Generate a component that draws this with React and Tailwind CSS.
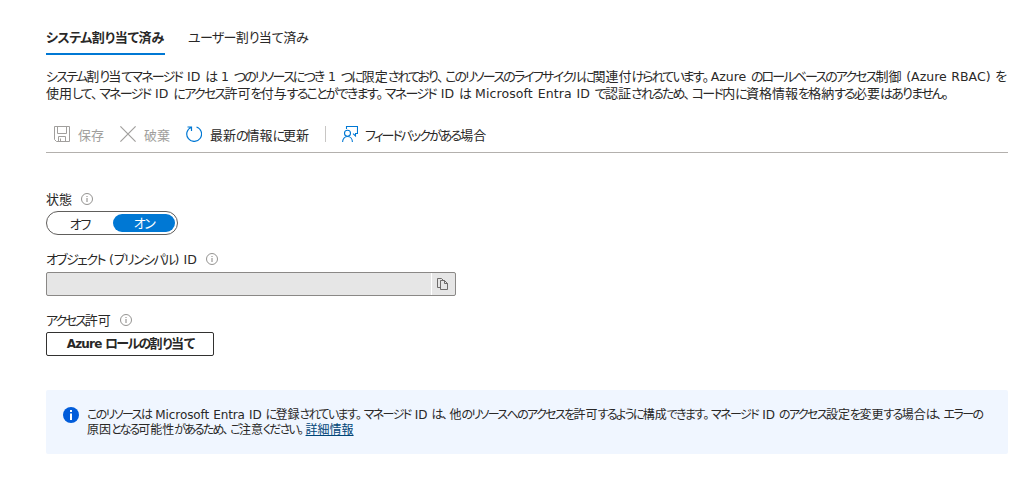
import React from "react";

const RUNS = /([\u3001\u3002]+|[\u3041-\u309f]+|[\u30a0-\u30ff]+|[\x20-\x7e]+|[^\u3001\u3002\u3041-\u30ff\x20-\x7e]+)/g;

// Mixed Japanese and Latin text: proportional kana, full-width kanji.
function Text({
  children,
  hira = "tracking-[-1.3px]",
  kata = "tracking-[-1.6px]",
  latin = "text-[12.5px] tracking-[0.1px]",
}) {
  return children.match(RUNS).map((run, i) => {
    if (/^[\u3001\u3002]/.test(run)) {
      return (
        <span key={i} className="[font-feature-settings:'palt'] tracking-[1.6px]">
          {run}
        </span>
      );
    }
    if (/^[\u3041-\u30ff]/.test(run)) {
      return (
        <span key={i} className={`[font-feature-settings:'palt'] ${run < "\u30a0" ? hira : kata}`}>
          {run}
        </span>
      );
    }
    if (/^[\x20-\x7e]/.test(run)) {
      return (
        <span key={i} className={`font-['DejaVu_Sans',sans-serif] whitespace-pre leading-none ${latin}`}>
          {run}
        </span>
      );
    }
    return <span key={i}>{run}</span>;
  });
}

function InfoOutline() {
  return (
    <svg className="size-3 shrink-0" viewBox="0 0 12 12" fill="none" stroke="#797775">
      <circle cx="6" cy="6" r="5.5" strokeWidth="0.8" />
      <path d="M6 5v4M6 3v1" strokeWidth="0.9" />
    </svg>
  );
}

function SaveIcon() {
  return (
    <svg className="size-4 shrink-0" viewBox="0 0 16 16" fill="none" stroke="#a19f9d">
      <path d="M.5.5h15v15H2.500L.5 13.500zM3.500.5v7h9v-7M4.500 15.500v-5h7v5M6.500 12.500v3" />
    </svg>
  );
}

function DiscardIcon() {
  return (
    <svg className="size-4 shrink-0" viewBox="0 0 16 16" fill="none" stroke="#a19f9d" strokeWidth="1.2">
      <path d="M.4.4l15.2 15.2M15.6.4L.4 15.6" />
    </svg>
  );
}

function RefreshIcon() {
  return (
    <svg className="size-4 shrink-0" viewBox="0 0 16 16" fill="none" stroke="#0078d4" strokeWidth="1.2">
      <path d="M10.500 1A7.400 7.400 0 1 1 5.300 1.200M1.500 1h4v4" />
    </svg>
  );
}

function FeedbackIcon() {
  return (
    <svg className="size-4 shrink-0" viewBox="0 0 16 16" fill="none" stroke="#0078d4" strokeWidth="1.1">
      <path d="M4.500 3V.5h11v7h-2v2.400L11 7.600" />
      <circle cx="5.500" cy="7.300" r="3" />
      <path d="M.6 16c0-3.200 2-5.500 4.900-5.500s4.900 2.300 4.900 5.500" />
    </svg>
  );
}

function CopyIcon() {
  return (
    <svg className="h-3 w-3" viewBox="0 0 12 12" fill="none" stroke="#605e5c" strokeWidth="0.9">
      <path d="M3.500 9.500H.5v-9h4l2 2M3.500 2.500h4l3 3v6h-7zM7.500 2.500v3h3" />
    </svg>
  );
}

export default function App() {
  return (
    <main className="h-[502px] w-[1016px] overflow-hidden bg-white pr-2 pl-[46px] pt-[28px] font-['Noto_Sans_CJK_JP',sans-serif] text-[13px] leading-[17px] whitespace-nowrap text-[#292827]">
      <nav className="flex h-[27px] gap-6">
        <div className="w-[119px] border-b-2 border-[#0078d4] font-bold">
          <Text kata="tracking-[-0.5px]" hira="tracking-[-0.5px]">システム割り当て済み</Text>
        </div>
        <div className="-ml-px">
          <Text kata="tracking-[-0.7px]" hira="tracking-[-0.7px]">ユーザー割り当て済み</Text>
        </div>
      </nav>

      <div className="mt-3">
        <div className="h-[17px] [word-spacing:0.7px]">
          <Text hira="tracking-[-1.950px]" kata="tracking-[-1.750px]">システム割り当てマネージド ID は 1 つのリソースにつき 1 つに限定されており、このリソースのライフサイクルに関連付けられています。</Text>
          <Text hira="tracking-[-1.950px]" kata="tracking-[-1.850px]" latin="text-[12.5px]">Azure のロールベースのアクセス制御 (Azure RBAC) を</Text>
        </div>
        <div className="h-[17px] [word-spacing:0.7px]">
          <Text hira="tracking-[-1.780px]" kata="tracking-[-1.700px]">使用して、マネージド ID にアクセス許可を付与することができます。マネージド ID は Microsoft Entra ID で認証されるため、コード内に資格情報を格納する必要はありません。</Text>
        </div>
      </div>

      <div className="mt-[15px] flex h-[37px] items-center border-b border-[#b3b0ad] pl-2">
        <div className="flex w-[66px] items-center gap-2 text-[#a19f9d]">
          <SaveIcon />
          保存
        </div>
        <div className="flex w-[66px] items-center gap-2 text-[#a19f9d]">
          <DiscardIcon />
          破棄
        </div>
        <div className="flex w-[139px] items-center gap-2">
          <RefreshIcon />
          <span>
            <Text hira="tracking-[-2px]">最新の情報に更新</Text>
          </span>
        </div>
        <div className="mr-4 h-4 w-px bg-[#c8c6c4]" />
        <div className="flex items-center gap-[7px]">
          <FeedbackIcon />
          <span>
            <Text kata="tracking-[-2px]" hira="tracking-[-1.9px]">フィードバックがある場合</Text>
          </span>
        </div>
      </div>

      <div className="mt-[37px] flex h-[17px] items-center gap-[9px]">
        状態
        <InfoOutline />
      </div>
      <div className="mt-1 flex h-6 w-[132px] items-center rounded-full border border-[#605e5c] pr-0.5">
        <div className="flex-1 text-center">
          <Text kata="tracking-[-1.2px]">オフ</Text>
        </div>
        <div className="h-[18px] w-[62px] rounded-full bg-[#0078d4] text-center text-white">
          <Text>オン</Text>
        </div>
      </div>

      <div className="mt-[15px] flex h-[17px] items-center gap-[9px]">
        <span>
          <Text>オブジェクト (プリンシパル) ID</Text>
        </span>
        <InfoOutline />
      </div>
      <div className="mt-[5px] flex h-6 w-[410px] rounded-[2px] border border-[#8a8886] bg-[#e6e6e6]">
        <div className="w-[385px] border-r border-white" />
        <div className="flex flex-1 items-center justify-center pr-px">
          <CopyIcon />
        </div>
      </div>

      <div className="mt-[15px] flex h-[17px] items-center gap-[9px]">
        <span>
          <Text kata="tracking-[-2.1px]">アクセス許可</Text>
        </span>
        <InfoOutline />
      </div>
      <button className="mt-1 flex h-6 w-[168px] items-center justify-center rounded-[2px] border border-[#323130] pb-1 font-bold">
        <span>
          <Text latin="text-[12px] tracking-[-0.8px]" hira="tracking-[-1.900px]">Azure ロールの割り当て</Text>
        </span>
      </button>

      <section className="mt-[34px] flex h-16 gap-2 rounded-[2px] bg-[#f0f6ff] pt-[17px] pl-[17px] text-[12px]">
        <svg className="size-4 shrink-0" viewBox="0 0 16 16">
          <circle cx="8" cy="8" r="8" fill="#015cda" />
          <path d="M7 6.500h2V13H7zM7 3h2v2H7z" fill="white" />
        </svg>
        <div className="-mt-px leading-[15px]">
          <div className="h-[15px] [word-spacing:0.4px]">
            <Text hira="tracking-[-1.700px]" latin="text-[12px] tracking-[-0.1px]">このリソースは Microsoft Entra ID に登録されています。マネージド ID は、他のリソースへのアクセスを許可するように構成できます。マネージド ID のアクセス設定を変更する場合は、エラーの</Text>
          </div>
          <div className="h-[15px]">
            <Text hira="tracking-[-1.850px]">原因となる可能性があるため、ご注意ください。</Text>
            <a className="text-[#004578] underline">詳細情報</a>
          </div>
        </div>
      </section>
    </main>
  );
}
